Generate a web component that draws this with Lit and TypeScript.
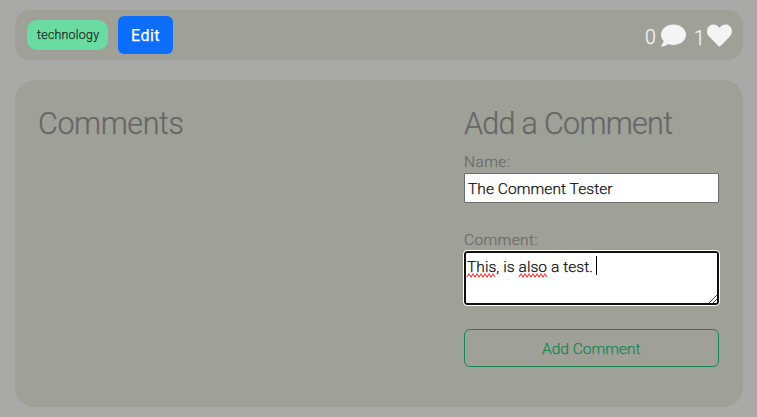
import { LitElement, html, svg, css } from "lit";
import { customElement, property } from "lit/decorators.js";

/** A single line of text set to a given width. */
@customElement("fit-text")
class FitText extends LitElement {
  @property() text = "";
  @property({ type: Number }) width = 100;
  @property({ type: Number }) size = 16;
  static styles = css`
    :host { display: block; flex: none; }
    svg { display: block; overflow: visible; }
    text { font-family: Roboto, "Liberation Sans", sans-serif; fill: currentColor; stroke: currentColor; stroke-width: 0.25px; white-space: pre; }
  `;
  render() {
    const h = Math.round(this.size * 1.2);
    return html`<svg width=${this.width} height=${h}>${svg`
      <text y=${Math.round(this.size)} font-size=${this.size} textLength=${this.width} lengthAdjust="spacing">${this.text}</text>`}</svg>`;
  }
}

@customElement("app-root")
class AppRoot extends LitElement {
  static styles = css`
    :host { display: block; box-sizing: border-box; height: 417px; padding: 10px 14px 10px 15px; background: #a9a9a8; color: #666; overflow: hidden; font-weight: 300; }
    * { box-sizing: border-box; }
    .bar { height: 50px; border-radius: 15px; background: #9fa098; display: flex; align-items: flex-start; padding: 0 11px 0 12px; }
    .tag { width: 81px; height: 30px; margin: 10px 10px 0 0; padding: 7px 0 0 10px; border-radius: 10px; background: #6adba2; color: #202b25; }
    .edit { width: 55px; height: 38px; margin-top: 6px; padding: 9px 0 0 13px; border-radius: 6px; background: #0d6efd; color: #fff; font-weight: 400; }
    .stats { display: flex; align-items: flex-start; margin-left: auto; color: #f4f4f4; }
    .zero { margin: 14px 5px 0 0; }
    .one { margin: 15px 6px 0 8px; }
    .icon { display: block; fill: #f4f4f4; margin-top: 13px; }
    .panel { height: 327px; margin-top: 20px; border-radius: 20px; background: #9fa098; display: flex; justify-content: space-between; padding: 23px 24px 0 23px; }
    .form { width: 255px; }
    .label { margin: 11px 0 0 0; color: #6c6c6c; }
    .input { height: 30px; margin-top: 3px; padding: 4px 0 0 3px; background: #fff; border: 1px solid #6c6c6c; border-radius: 1px; color: #111; }
    .second { margin-top: 26px; }
    .area { height: 54px; margin-top: 3px; padding: 3px 0 0 1px; background: #fff; border: 2px solid #101010; outline: 1px solid #fff; border-radius: 3px; color: #111; position: relative; }
    .line { display: flex; gap: 3px; }
    .caret { width: 1px; height: 19px; background: #000; }
    .waves { position: absolute; left: 0; top: 20px; fill: none; stroke: #f33a3a; stroke-width: 1.1; }
    .grip { position: absolute; right: 0; bottom: 0; stroke: #444; stroke-width: 1; }
    .submit { height: 38px; margin-top: 24px; border: 1px solid #198754; border-radius: 6px; color: #198754; display: flex; justify-content: center; padding: 8px 1px 0 0; }
  `;
  private wave(x: number, count: number) {
    return `M${x} 4` + "l2 -3l2 3".repeat(count);
  }
  render() {
    return html`
      <div class="bar">
        <div class="tag"><fit-text text="technology" width="62" size="12.3"></fit-text></div>
        <div class="edit"><fit-text text="Edit" width="28.500" size="16"></fit-text></div>
        <div class="stats">
          <fit-text class="zero" text="0" width="11" size="19.5"></fit-text>
          <svg class="icon" width="25" height="25" viewBox="0 0 512 512"><path d="M256 32C114.600 32 0 125.100 0 240c0 49.600 21.400 95 57 130.700C44.500 421.100 2.700 466 2.200 466.500c-2.200 2.300-2.800 5.700-1.500 8.700S4.800 480 8 480c66.300 0 116-31.800 140.600-51.400 32.700 12.300 69 19.400 107.400 19.400 141.400 0 256-93.100 256-208S397.400 32 256 32z"/></svg>
          <fit-text class="one" text="1" width="7" size="19.5"></fit-text>
          <svg class="icon" width="25" height="25" viewBox="0 0 512 512"><path d="M462.300 62.600C407.500 15.900 326 24.300 275.700 76.200L256 96.500l-19.700-20.300C186.100 24.300 104.500 15.900 49.700 62.600c-62.800 53.600-66.100 149.800-9.900 207.900l193.500 199.800c12.500 12.900 32.800 12.900 45.300 0l193.500-199.800c56.300-58.100 53-154.300-9.800-207.900z"/></svg>
        </div>
      </div>
      <div class="panel">
        <fit-text text="Comments" width="146" size="30.5"></fit-text>
        <div class="form">
          <fit-text text="Add a Comment" width="209" size="30.5"></fit-text>
          <fit-text class="label" text="Name:" width="46" size="15.500"></fit-text>
          <div class="input"><fit-text text="The Comment Tester" width="144.5" size="15.500"></fit-text></div>
          <fit-text class="label second" text="Comment:" width="73.500" size="15.500"></fit-text>
          <div class="area">
            <div class="line"><fit-text text="This, is also a test." width="126" size="15.500"></fit-text><div class="caret"></div></div>
            <svg class="waves" width="120" height="6"><path d=${this.wave(1, 7) + this.wave(53, 7)}></path></svg>
            <svg class="grip" width="8" height="8"><path d="M0 8L8 0M4 8L8 4"/></svg>
          </div>
          <div class="submit"><fit-text text="Add Comment" width="98.500" size="15.500"></fit-text></div>
        </div>
      </div>
    `;
  }
}
